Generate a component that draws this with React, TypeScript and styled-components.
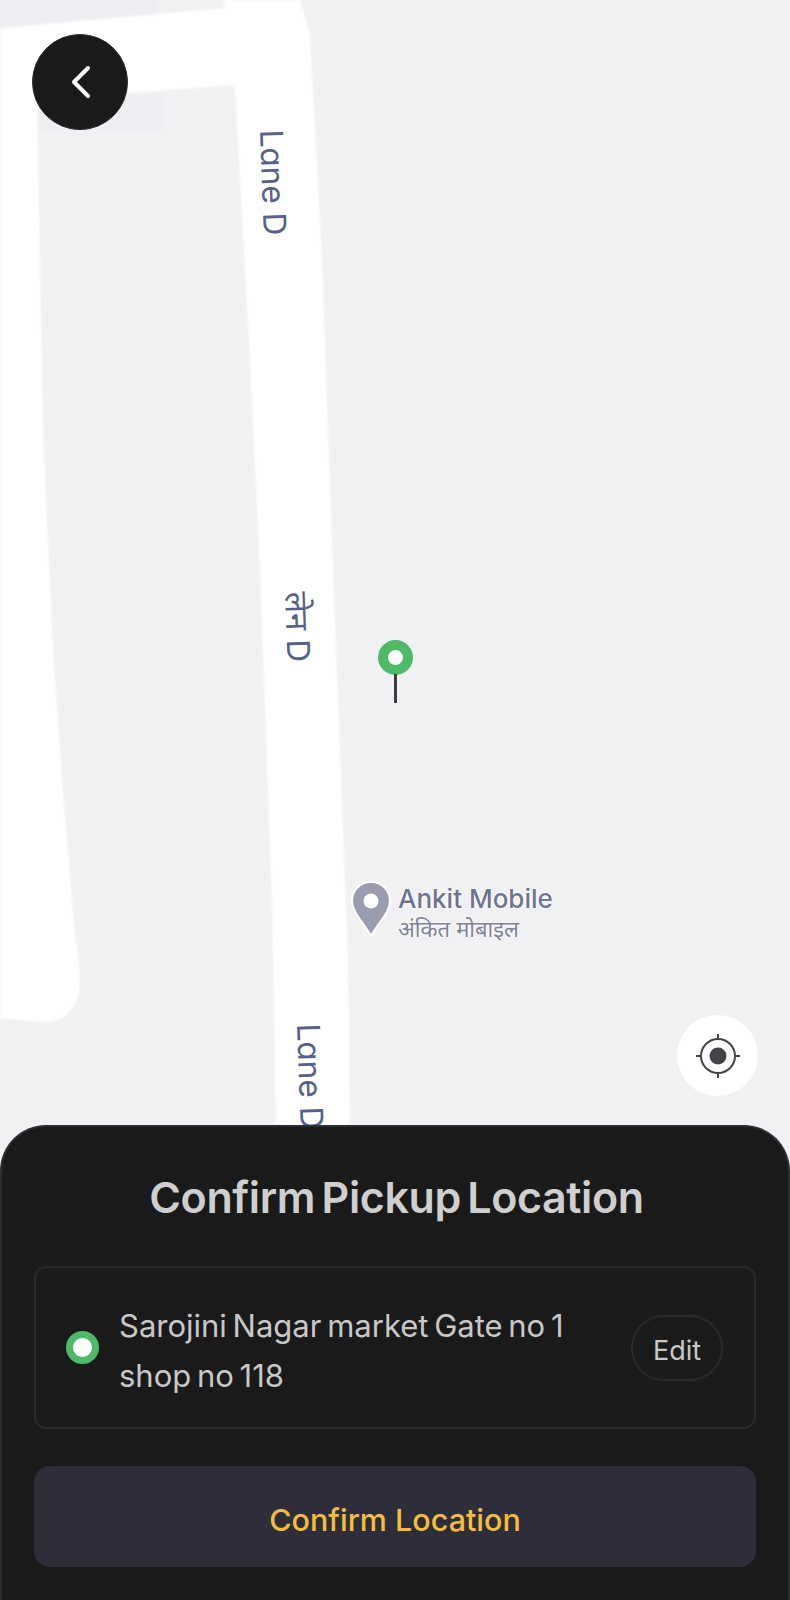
import React from 'react'
import styled, { createGlobalStyle } from 'styled-components'

const GlobalStyle = createGlobalStyle`
    html, body {
        margin: 0;
        padding: 0;
        background: #f1f1f4;
    }

    * {
        box-sizing: border-box;
    }
`

const Page = styled.div`
    display: flex;
    flex-direction: column;
    width: 790px;
    height: 1600px;
    overflow: hidden;
    font-family: 'Inter', 'Noto Sans', 'Noto Sans Devanagari', sans-serif;
`

const MapArea = styled.div`
    position: relative;
    flex: 1;
    overflow: hidden;
    background: #f1f1f4;
`

const Roads = styled.svg`
    position: absolute;
    inset: 0;
    width: 790px;
    height: 1125px;
    filter: blur(1.2px);
`

const RoadLabel = styled.span<{ $x: number; $y: number; $angle: number }>`
    position: absolute;
    left: ${(p) => p.$x}px;
    top: ${(p) => p.$y}px;
    font-size: 31.5px;
    line-height: 36px;
    white-space: nowrap;
    color: #56618a;
    font-feature-settings: 'cv11';
    transform-origin: 0 0;
    transform: rotate(${(p) => p.$angle}deg);
`

const BackButton = styled.button`
    position: absolute;
    left: 32px;
    top: 34px;
    display: flex;
    align-items: center;
    justify-content: center;
    width: 96px;
    height: 96px;
    padding: 0;
    border: 1px solid #2a2a2c;
    border-radius: 50%;
    background: #1a1a1a;
`

const LocateButton = styled.button`
    position: absolute;
    left: 677px;
    top: 1015px;
    display: flex;
    align-items: center;
    justify-content: center;
    width: 81px;
    height: 81px;
    padding: 0;
    border: none;
    border-radius: 50%;
    background: #ffffff;
`

const PickupPin = styled.div`
    position: absolute;
    left: 378px;
    top: 640px;
    display: flex;
    flex-direction: column;
    align-items: center;
    width: 35px;
`

const PinHead = styled.div`
    width: 35px;
    height: 35px;
    border: 10px solid #4fb96a;
    border-radius: 50%;
    background: #ffffff;
`

const PinStem = styled.div`
    width: 3px;
    height: 29px;
    margin-top: -1px;
    background: #3d3d45;
`

const Place = styled.div`
    position: absolute;
    left: 350px;
    top: 880px;
    display: flex;
    column-gap: 6px;
`

const PlaceText = styled.div`
    display: flex;
    flex-direction: column;
    padding-top: 3px;
    text-shadow: 0 0 2px #ffffff, 0 0 2px #ffffff, 0 0 3px #ffffff;
`

const PlaceName = styled.span`
    font-size: 26px;
    font-weight: 500;
    line-height: 32px;
    white-space: nowrap;
    color: #6f7490;
    font-feature-settings: 'cv11';
`

const PlaceLocal = styled.span`
    font-size: 22px;
    line-height: 28px;
    white-space: nowrap;
    color: #7f8296;
`

const Sheet = styled.section`
    display: flex;
    flex-direction: column;
    flex-shrink: 0;
    height: 475px;
    padding: 40px 32px 33px 32px;
    border: 2px solid #2a2d33;
    border-bottom: none;
    border-radius: 46px 46px 0 0;
    background: #1a1a1a;
`

const Title = styled.h1`
    margin: 0;
    padding-left: 3px;
    font-size: 43px;
    font-weight: 600;
    line-height: 60px;
    letter-spacing: -0.4px;
    word-spacing: -4px;
    text-align: center;
    white-space: nowrap;
    color: #cfcfcf;
`

const AddressCard = styled.div`
    display: flex;
    align-items: center;
    height: 163px;
    margin-top: 39px;
    padding: 0 31px 0 30px;
    border: 2px solid #2a2a2c;
    border-radius: 12px;
`

const GreenDot = styled.div`
    flex-shrink: 0;
    width: 33px;
    height: 33px;
    border: 7px solid #4fb96a;
    border-radius: 50%;
    background: #ffffff;
`

const Address = styled.p`
    flex: 1;
    max-width: 480px;
    margin: 0 auto 0 20px;
    padding-top: 7px;
    font-size: 31px;
    line-height: 50px;
    word-spacing: -3px;
    color: #c8c8c8;
`

const EditButton = styled.button`
    flex-shrink: 0;
    width: 92px;
    height: 66px;
    padding: 5px 0 0;
    border: 2px solid #2a2a2c;
    border-radius: 33px;
    background: transparent;
    font-family: inherit;
    font-size: 27px;
    color: #c8c8c8;
`

const ConfirmButton = styled.button`
    height: 101px;
    margin-top: 37px;
    padding: 6px 0 0;
    border: none;
    border-radius: 16px;
    background: #2d2e3a;
    font-family: inherit;
    font-size: 30.5px;
    font-weight: 500;
    color: #f5bd3d;
`

export default function App() {
    return (
        <Page>
            <GlobalStyle />
            <MapArea>
                <Roads viewBox="0 0 790 1125">
                    <path d="M0 0H158V24L0 30Z" fill="#eeeef2" />
                    <path d="M40 95H163V130H40Z" fill="#eeeef2" />
                    <path
                        d="M0 28L225 8L223 0H300L310 35L322 260L333 570L348 960L350 1125H276L272 900L260 570L250 360L235 85L125 93L37 100L43 433L53 650L63 793L75 937Q84 985 76 1002Q66 1024 40 1022L0 1018Z"
                        fill="#ffffff"
                    />
                </Roads>
                <RoadLabel $x={289} $y={129} $angle={88}>Lane D</RoadLabel>
                <RoadLabel $x={314} $y={591} $angle={88}>लेन D</RoadLabel>
                <RoadLabel $x={326} $y={1023} $angle={88}>Lane D</RoadLabel>
                <BackButton aria-label="Back">
                    <svg width="40" height="40" viewBox="0 0 40 40" fill="none">
                        <path d="M22 6L8 20L22 34" transform="translate(6 0)" stroke="#ffffff" strokeWidth="4" strokeLinecap="round" strokeLinejoin="round" />
                    </svg>
                </BackButton>
                <PickupPin>
                    <PinHead />
                    <PinStem />
                </PickupPin>
                <Place>
                    <svg width="42" height="58" viewBox="0 0 42 58">
                        <path d="M21 2C10 2 2 10.5 2 21C2 32 13 42 21 56C29 42 40 32 40 21C40 10.5 32 2 21 2Z" fill="#9a9db0" stroke="#ffffff" strokeWidth="2" />
                        <circle cx="21" cy="21" r="7.5" fill="#ffffff" />
                    </svg>
                    <PlaceText>
                        <PlaceName>Ankit Mobile</PlaceName>
                        <PlaceLocal>अंकित मोबाइल</PlaceLocal>
                    </PlaceText>
                </Place>
                <LocateButton aria-label="Use my location">
                    <svg width="48" height="48" viewBox="0 0 48 48" fill="none">
                        <circle cx="24" cy="24" r="17" stroke="#444448" strokeWidth="2" />
                        <circle cx="24" cy="24" r="8.5" fill="#444448" />
                        <path d="M24 2V8M24 40V46M2 24H8M40 24H46" stroke="#444448" strokeWidth="2" />
                    </svg>
                </LocateButton>
            </MapArea>
            <Sheet>
                <Title>Confirm Pickup Location</Title>
                <AddressCard>
                    <GreenDot />
                    <Address>Sarojini Nagar market Gate no 1 shop no 118</Address>
                    <EditButton>Edit</EditButton>
                </AddressCard>
                <ConfirmButton>Confirm Location</ConfirmButton>
            </Sheet>
        </Page>
    )
}
